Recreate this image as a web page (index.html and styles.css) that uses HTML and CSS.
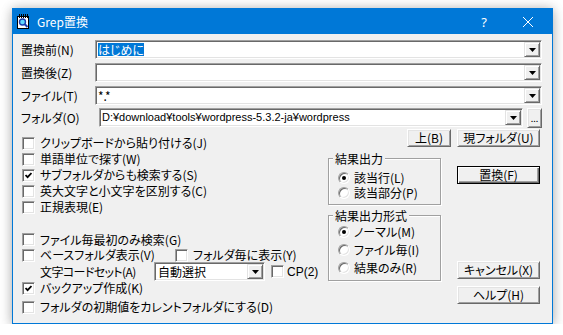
FILE: index.html
```html
<!DOCTYPE html>
<html lang="ja">
<head>
    <meta charset="UTF-8">
    <title>Grep置換</title>
    <link rel="stylesheet" href="styles.css">
</head>
<body>
    <div class="dialog">
        <div class="titlebar">
            <svg class="app-icon" width="13" height="15" viewBox="0 0 13 15">
                <rect x="0.5" y="2.5" width="11" height="12" fill="#fff" stroke="#000"/>
                <rect x="2" y="0" width="1" height="4" fill="#000"/>
                <rect x="4" y="0" width="1" height="4" fill="#000"/>
                <rect x="6" y="0" width="1" height="4" fill="#000"/>
                <rect x="8" y="0" width="1" height="4" fill="#000"/>
                <rect x="10" y="0" width="1" height="4" fill="#000"/>
                <circle cx="5.5" cy="8" r="3" fill="#5fd8ff" stroke="#1c3fb0" stroke-width="1.4"/>
                <line x1="7.8" y1="10.3" x2="10.5" y2="13" stroke="#1c3fb0" stroke-width="2"/>
            </svg>
            <span class="title">Grep置換</span>
            <span class="caption-btn">?</span>
            <span class="caption-btn close">
                <svg width="10" height="10" viewBox="0 0 10 10"><path d="M0 0L10 10M10 0L0 10" stroke="#fff" stroke-width="1"/></svg>
            </span>
        </div>

        <div class="content">
            <div class="field-row">
                <span class="field-label">置換前(N)</span>
                <div class="combo">
                    <span class="combo-text"><span class="sel">はじめに</span></span>
                    <span class="drop"><svg width="7" height="4" viewBox="0 0 7 4"><path d="M0 0H7L3.5 4Z" fill="#000"/></svg></span>
                </div>
            </div>
            <div class="field-row">
                <span class="field-label">置換後(Z)</span>
                <div class="combo">
                    <span class="combo-text"></span>
                    <span class="drop"><svg width="7" height="4" viewBox="0 0 7 4"><path d="M0 0H7L3.5 4Z" fill="#000"/></svg></span>
                </div>
            </div>
            <div class="field-row">
                <span class="field-label">ファイル(T)</span>
                <div class="combo">
                    <span class="combo-text">*.*</span>
                    <span class="drop"><svg width="7" height="4" viewBox="0 0 7 4"><path d="M0 0H7L3.5 4Z" fill="#000"/></svg></span>
                </div>
            </div>
            <div class="field-row folder-row">
                <span class="field-label">フォルダ(O)</span>
                <div class="combo">
                    <span class="combo-text path">D:¥download¥tools¥wordpress-5.3.2-ja¥wordpress</span>
                    <span class="drop"><svg width="7" height="4" viewBox="0 0 7 4"><path d="M0 0H7L3.5 4Z" fill="#000"/></svg></span>
                </div>
                <button class="btn browse">...</button>
            </div>

            <div class="lower">
                <div class="options">
                    <div class="check-row"><span class="check"></span>クリップボードから貼り付ける(J)</div>
                    <div class="check-row"><span class="check"></span>単語単位で探す(W)</div>
                    <div class="check-row"><span class="check checked"><svg width="7" height="7" viewBox="0 0 7 7"><path d="M0.5 3L2.6 5.2L6.5 1" stroke="#000" stroke-width="1.8" fill="none"/></svg></span>サブフォルダからも検索する(S)</div>
                    <div class="check-row"><span class="check"></span>英大文字と小文字を区別する(C)</div>
                    <div class="check-row"><span class="check"></span>正規表現(E)</div>

                    <div class="check-row row-file"><span class="check"></span>ファイル毎最初のみ検索(G)</div>
                    <div class="check-row row-base">
                        <span class="check-item first"><span class="check"></span>ベースフォルダ表示(V)</span>
                        <span class="check-item"><span class="check"></span>フォルダ毎に表示(Y)</span>
                    </div>
                    <div class="code-row">
                        <span class="code-label">文字コードセット(A)</span>
                        <div class="combo code-combo">
                            <span class="combo-text">自動選択</span>
                            <span class="drop"><svg width="7" height="4" viewBox="0 0 7 4"><path d="M0 0H7L3.5 4Z" fill="#000"/></svg></span>
                        </div>
                        <span class="check cp-check"></span><span class="cp-text">CP(2)</span>
                    </div>
                    <div class="check-row row-backup"><span class="check checked"><svg width="7" height="7" viewBox="0 0 7 7"><path d="M0.5 3L2.6 5.2L6.5 1" stroke="#000" stroke-width="1.8" fill="none"/></svg></span>バックアップ作成(K)</div>
                    <div class="check-row row-init"><span class="check"></span>フォルダの初期値をカレントフォルダにする(D)</div>
                </div>

                <div class="side">
                    <div class="side-top">
                        <button class="btn btn-up">上(B)</button>
                        <button class="btn btn-wide">現フォルダ(U)</button>
                    </div>
                    <div class="side-main">
                        <div class="groups">
                            <div class="group group-out">
                                <div class="group-title">結果出力</div>
                                <div class="radio-list">
                                    <div class="radio-row"><span class="radio on"></span>該当行(L)</div>
                                    <div class="radio-row"><span class="radio"></span>該当部分(P)</div>
                                </div>
                            </div>
                            <div class="group group-format">
                                <div class="group-title">結果出力形式</div>
                                <div class="radio-list">
                                    <div class="radio-row"><span class="radio on"></span>ノーマル(M)</div>
                                    <div class="radio-row"><span class="radio"></span>ファイル毎(I)</div>
                                    <div class="radio-row"><span class="radio"></span>結果のみ(R)</div>
                                </div>
                            </div>
                        </div>
                        <div class="actions">
                            <button class="btn btn-wide default btn-replace">置換(F)</button>
                            <button class="btn btn-wide btn-cancel">キャンセル(X)</button>
                            <button class="btn btn-wide btn-help">ヘルプ(H)</button>
                        </div>
                    </div>
                </div>
            </div>
        </div>
    </div>
</body>
</html>
```

FILE: styles.css
```css
body {
    margin: 0;
    background-color: #fff;
    font-family: "Noto Sans CJK JP", sans-serif;
    font-size: 12px;
    line-height: 14px;
    font-feature-settings: "palt";
    color: #000;
}
.dialog {
    width: 541px;
    height: 316px;
    box-sizing: border-box;
    margin: 8px 0 0 12px;
    border: 1px solid #0078d7;
    background-color: #f0f0f0;
    box-shadow: 0 0 10px rgba(0,0,0,0.22), 0 4px 14px rgba(0,0,0,0.15);
}
.titlebar {
    height: 25px;
    background-color: #0078d7;
    color: #fff;
    display: flex;
    align-items: center;
}
.app-icon {
    margin-left: 4px;
    flex: none;
}
.title {
    flex: 1;
    margin-left: 7px;
    font-size: 12px;
    font-feature-settings: normal;
}
.caption-btn {
    width: 44px;
    height: 25px;
    display: flex;
    align-items: center;
    justify-content: center;
    font-family: "Noto Sans", sans-serif;
    font-size: 13px;
}
.close {
    margin-right: 2px;
}
.content {
    padding: 6px 10px 0 8px;
}

/* top combo rows */
.field-row {
    display: flex;
    align-items: center;
    height: 19px;
    margin-top: 4px;
}
.field-row:first-child {
    margin-top: 0;
}
.folder-row {
    margin-top: 3px;
    gap: 4px;
}
.field-label {
    width: 74px;
    flex: none;
}
.combo {
    flex: 1;
    height: 19px;
    box-sizing: border-box;
    padding: 1px;
    background-color: #fff;
    border: 1px solid;
    border-color: #a0a0a0 #fff #fff #a0a0a0;
    box-shadow: inset 1px 1px #696969, inset -1px -1px #e3e3e3;
    display: flex;
    align-items: center;
}
.combo-text {
    flex: 1;
    padding-left: 1px;
    line-height: 15px;
    white-space: nowrap;
}
.path {
    font-family: "Liberation Sans", sans-serif;
    font-size: 11px;
}
.sel {
    background-color: #0078d7;
    color: #fff;
    line-height: 13px;
    display: inline-block;
}
.drop {
    width: 16px;
    height: 15px;
    flex: none;
    box-sizing: border-box;
    background-color: #f0f0f0;
    border: 1px solid;
    border-color: #e3e3e3 #696969 #696969 #e3e3e3;
    box-shadow: inset 1px 1px #fff, inset -1px -1px #a0a0a0;
    display: flex;
    align-items: center;
    justify-content: center;
}

/* buttons */
.btn {
    height: 18px;
    box-sizing: border-box;
    padding: 0;
    background-color: #f0f0f0;
    border: 1px solid;
    border-color: #fff #696969 #696969 #fff;
    box-shadow: inset 1px 1px #e3e3e3, inset -1px -1px #a0a0a0;
    font: inherit;
    line-height: 14px;
    color: #000;
    display: flex;
    align-items: center;
    justify-content: center;
    flex: none;
}
.btn.default {
    border-color: #000;
    box-shadow: inset 1px 1px #fff, inset -1px -1px #696969, inset -2px -2px #a0a0a0;
}
.browse {
    width: 15px;
    height: 20px;
    font-size: 9px;
    line-height: 9px;
    align-items: flex-end;
    padding-bottom: 4px;
}
.btn-up {
    width: 44px;
}
.btn-wide {
    width: 83px;
}

/* lower area */
.lower {
    display: flex;
}
.options {
    width: 307px;
    flex: none;
    padding-top: 8px;
}
.check-row {
    display: flex;
    align-items: center;
    height: 16px;
    padding-left: 1px;
    white-space: nowrap;
}
.check-item {
    display: flex;
    align-items: center;
}
.check-item.first {
    width: 153px;
}
.check {
    width: 13px;
    height: 13px;
    flex: none;
    box-sizing: border-box;
    margin-right: 5px;
    background-color: #fff;
    border: 1px solid;
    border-color: #a0a0a0 #fff #fff #a0a0a0;
    box-shadow: inset 1px 1px #696969, inset -1px -1px #e3e3e3;
    display: flex;
    align-items: center;
    justify-content: center;
}
.row-file {
    margin-top: 17px;
    height: 15px;
}
.row-base {
    margin-top: 1px;
    height: 14px;
}
.code-row {
    display: flex;
    align-items: center;
    height: 19px;
    white-space: nowrap;
}
.code-label {
    width: 114px;
    margin-left: 19px;
    flex: none;
    letter-spacing: -0.6px;
}
.code-combo {
    flex: none;
    width: 111px;
}
.code-combo .combo-text {
    padding-left: 2px;
}
.cp-check {
    margin-left: 6px;
    margin-right: 3px;
}
.cp-text {
    font-family: "Liberation Sans", sans-serif;
}
.row-backup {
    height: 14px;
}
.row-init {
    margin-top: 5px;
    height: 14px;
}

/* right side */
.side {
    width: 212px;
    flex: none;
}
.side-top {
    display: flex;
    justify-content: flex-end;
    gap: 6px;
    margin-top: 2px;
}
.side-main {
    display: flex;
    justify-content: space-between;
}
.groups {
    width: 113px;
}
.group {
    box-sizing: border-box;
    border: 1px solid #a0a0a0;
    box-shadow: inset 1px 1px #fff, 1px 1px #fff;
}
.group-out {
    margin-top: 11px;
    height: 47px;
}
.group-format {
    margin-top: 10px;
    height: 66px;
}
.group-title {
    width: fit-content;
    margin: -7px 0 0 4px;
    padding: 0 2px;
    background-color: #f0f0f0;
}
.radio-list {
    padding-left: 9px;
}
.group-out .radio-list {
    margin-top: 4px;
}
.radio-row {
    display: flex;
    align-items: center;
    height: 15px;
    white-space: nowrap;
}
.group-format .radio-row {
    height: 18px;
}
.radio {
    width: 12px;
    height: 12px;
    flex: none;
    box-sizing: border-box;
    margin-right: 4px;
    border-radius: 50%;
    background-color: #fff;
    border: 1px solid;
    border-color: #a0a0a0 #fff #fff #a0a0a0;
    box-shadow: inset 1px 1px #696969, inset -1px -1px #e3e3e3;
    display: flex;
    align-items: center;
    justify-content: center;
}
.radio.on::after {
    content: "";
    width: 4px;
    height: 4px;
    border-radius: 50%;
    background-color: #000;
}
.actions {
    width: 83px;
}
.btn-replace {
    margin-top: 19px;
}
.btn-cancel {
    margin-top: 77px;
}
.btn-help {
    margin-top: 7px;
}
```
